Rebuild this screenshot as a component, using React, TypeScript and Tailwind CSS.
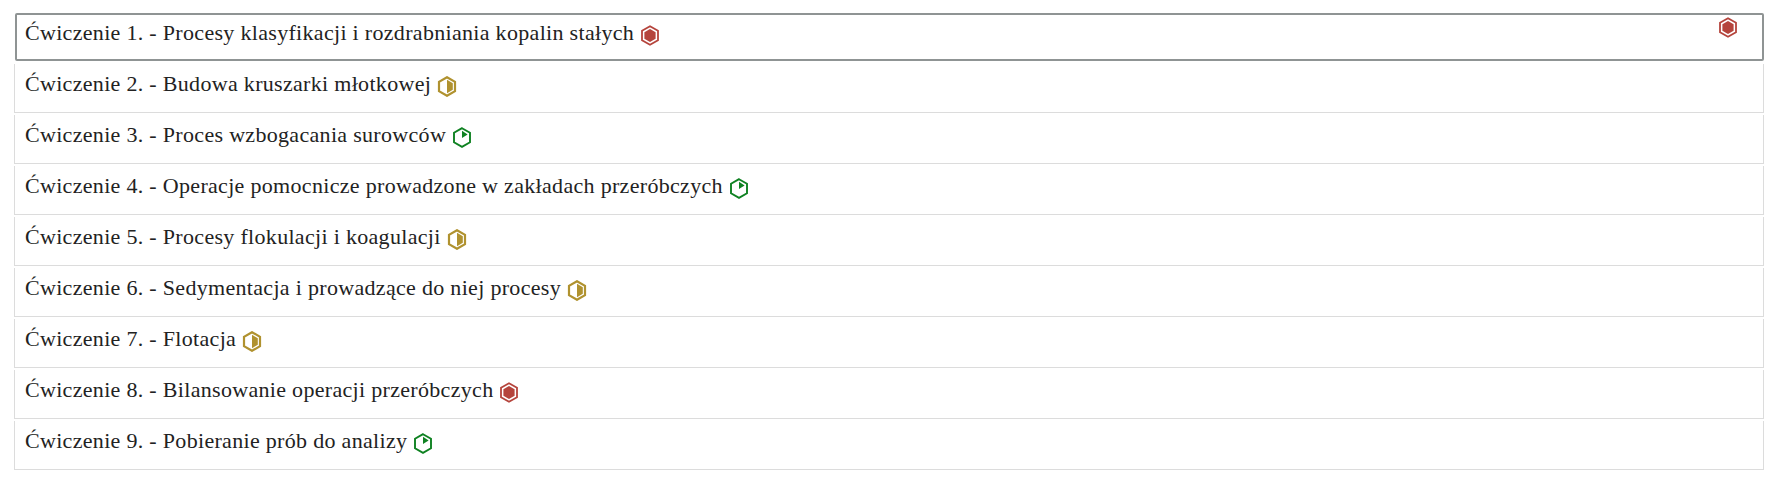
import React from 'react';

type Level = 'hard' | 'medium' | 'easy';

const exercises: { title: string; level: Level }[] = [
  { title: 'Ćwiczenie 1. - Procesy klasyfikacji i rozdrabniania kopalin stałych', level: 'hard' },
  { title: 'Ćwiczenie 2. - Budowa kruszarki młotkowej', level: 'medium' },
  { title: 'Ćwiczenie 3. - Proces wzbogacania surowców', level: 'easy' },
  { title: 'Ćwiczenie 4. - Operacje pomocnicze prowadzone w zakładach przeróbczych', level: 'easy' },
  { title: 'Ćwiczenie 5. - Procesy flokulacji i koagulacji', level: 'medium' },
  { title: 'Ćwiczenie 6. - Sedymentacja i prowadzące do niej procesy', level: 'medium' },
  { title: 'Ćwiczenie 7. - Flotacja', level: 'medium' },
  { title: 'Ćwiczenie 8. - Bilansowanie operacji przeróbczych', level: 'hard' },
  { title: 'Ćwiczenie 9. - Pobieranie prób do analizy', level: 'easy' },
];

const HEX = 'M10 1.2 L18 5.8 L18 15.2 L10 19.8 L2 15.2 L2 5.8 Z';

const LevelIcon: React.FC<{ level: Level }> = ({ level }) => {
  if (level === 'hard') {
    return (
      <svg viewBox="0 0 20 21" className="w-5 h-[21px] shrink-0">
        <path d={HEX} fill="none" stroke="#b5443c" strokeWidth="1.8" />
        <path d="M10 4 L15.6 7.2 L15.6 13.8 L10 17 L4.4 13.8 L4.4 7.2 Z" fill="#b5443c" />
      </svg>
    );
  }
  if (level === 'medium') {
    return (
      <svg viewBox="0 0 20 21" className="w-5 h-[21px] shrink-0">
        <path d={HEX} fill="none" stroke="#b0922f" strokeWidth="2.2" />
        <path d="M10 3.8 L15.8 7.2 L15.8 13.8 L10 17.2 Z" fill="#b0922f" />
      </svg>
    );
  }
  return (
    <svg viewBox="0 0 20 21" className="w-5 h-[21px] shrink-0">
      <path d={HEX} fill="none" stroke="#0f8222" strokeWidth="1.9" />
      <path d="M10 3.8 L10 11 L15.6 7.4 Z" fill="#0f8222" />
    </svg>
  );
};

export default function App() {
  return (
    <div className="bg-white min-h-[496px] pt-[13px] pl-[14px] pr-[15px] font-['Liberation_Serif',serif] text-[#222]">
      <div className="flex flex-col">
        {exercises.map((ex, i) => (
          <div
            key={ex.title}
            className={
              i === 0
                ? 'relative h-[48px] flex items-start pl-[8px] pt-[4px] border-2 border-[#8f9494] rounded-[2px] ml-px mb-[3px]'
                : 'h-[49px] flex items-start pl-[10px] pt-[6px] border-l border-r border-b border-[#dcdcdc] mb-[2px]'
            }
          >
            <span className="text-[22px] leading-[28px] whitespace-nowrap tracking-[0.31px]">{ex.title}</span>
            <span className="ml-[6px] mt-[6px]"><LevelIcon level={ex.level} /></span>
            {i === 0 && (
              <span className="absolute right-[24px] top-[2px]"><LevelIcon level="hard" /></span>
            )}
          </div>
        ))}
      </div>
    </div>
  );
}
